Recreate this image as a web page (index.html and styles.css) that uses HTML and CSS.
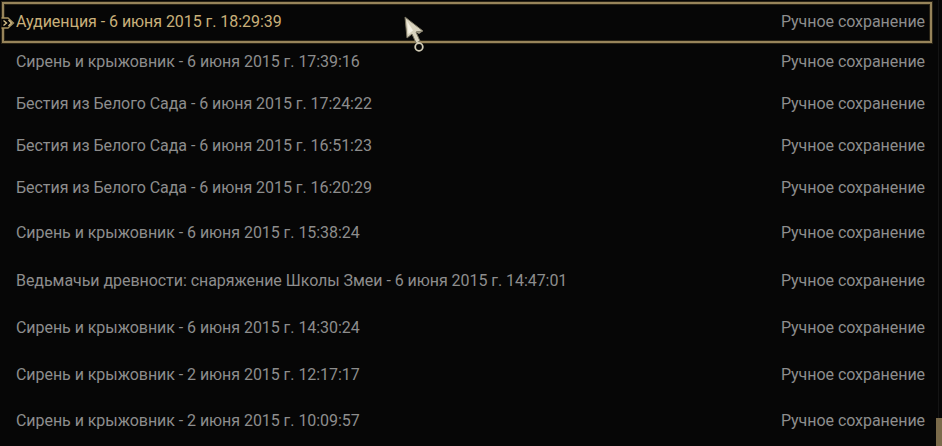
FILE: index.html
```html
<!DOCTYPE html>
<html lang="ru">
<head>
<meta charset="utf-8">
<link rel="stylesheet" href="styles.css">
</head>
<body>
<div class="screen">
  <ul class="saves">
    <li class="row selected r1">
      <svg class="marker" width="16" height="16" viewBox="0 0 16 16"><path d="M0.5 3 L7 3 L12.5 8 L7 13 L0.5 13" fill="#060606" stroke="#a8935f" stroke-width="1.3"/><path d="M2.5 5.5 L5.5 8 L2.5 10.5" fill="none" stroke="#d6c08a" stroke-width="1.4"/><path d="M7.5 5 L10.5 8 L7.5 11" fill="none" stroke="#d6c08a" stroke-width="1.4"/></svg>
      <span class="name">Аудиенция - 6 июня 2015 г. 18:29:39</span>
      <span class="type">Ручное сохранение</span>
    </li>
    <li class="row r2"><span class="name">Сирень и крыжовник - 6 июня 2015 г. 17:39:16</span><span class="type">Ручное сохранение</span></li>
    <li class="row r3"><span class="name">Бестия из Белого Сада - 6 июня 2015 г. 17:24:22</span><span class="type">Ручное сохранение</span></li>
    <li class="row r4"><span class="name">Бестия из Белого Сада - 6 июня 2015 г. 16:51:23</span><span class="type">Ручное сохранение</span></li>
    <li class="row r5"><span class="name">Бестия из Белого Сада - 6 июня 2015 г. 16:20:29</span><span class="type">Ручное сохранение</span></li>
    <li class="row r6"><span class="name">Сирень и крыжовник - 6 июня 2015 г. 15:38:24</span><span class="type">Ручное сохранение</span></li>
    <li class="row r7"><span class="name">Ведьмачьи древности: снаряжение Школы Змеи - 6 июня 2015 г. 14:47:01</span><span class="type">Ручное сохранение</span></li>
    <li class="row r8"><span class="name">Сирень и крыжовник - 6 июня 2015 г. 14:30:24</span><span class="type">Ручное сохранение</span></li>
    <li class="row r9"><span class="name">Сирень и крыжовник - 2 июня 2015 г. 12:17:17</span><span class="type">Ручное сохранение</span></li>
    <li class="row r10"><span class="name">Сирень и крыжовник - 2 июня 2015 г. 10:09:57</span><span class="type">Ручное сохранение</span></li>
  </ul>
  <div class="scrollbar"><div class="thumb"></div></div>
  <svg class="cursor" width="26" height="38" viewBox="0 0 26 38">
    <path d="M2 2 L4 23 L9 19 L13 28 L17 26 L13 17 L20 16 Z" fill="#d9d3be" stroke="#77725f" stroke-width="1"/>
    <path d="M4 6 L5.5 19 L10 15.5 Z" fill="#f4f0e2"/>
    <path d="M13 17 L20 16 L16 19 Z" fill="#9e9883"/>
    <circle cx="16" cy="32" r="3.8" fill="none" stroke="#d2ccb6" stroke-width="1.8"/>
    <path d="M14 27 L16 28.5" stroke="#d2ccb6" stroke-width="1.8"/>
  </svg>
</div>
</body>
</html>
```
FILE: styles.css
```css
html, body {
  margin: 0;
  padding: 0;
  background: #050505;
}
.screen {
  position: relative;
  width: 942px;
  height: 446px;
  overflow: hidden;
  background: #060606;
  display: flex;
  font-family: Roboto, "Noto Sans", sans-serif;
}
.saves {
  list-style: none;
  margin: 2px 0 0 2px;
  padding: 0;
  width: 930px;
  display: grid;
  grid-template-rows: 41px 41px 43px 41px 43px 47px 49px 45px 48px 45px;
  align-content: start;
}
.row {
  position: relative;
  display: flex;
  align-items: center;
  justify-content: space-between;
  padding: 0 7px 4px 14px;
  font-size: 16px;
  letter-spacing: -0.05px;
  color: #8d8d8d;
  white-space: nowrap;
}
.row.selected {
  border: 2px solid #97845a;
  box-shadow: inset 0 0 0 1px #2a2416, 0 0 0 1px #2a2416;
  padding: 0 5px 3px 12px;
}
.row.selected .name {
  color: #c9b07a;
}
.marker {
  position: absolute;
  left: -3px;
  top: 11px;
}
.scrollbar {
  position: relative;
  margin-left: 4px;
  width: 6px;
  height: 446px;
}
.scrollbar::before {
  content: "";
  position: absolute;
  left: 2px;
  top: 0;
  bottom: 0;
  width: 1px;
  background: #141414;
}
.thumb {
  position: absolute;
  left: 0;
  bottom: 0;
  width: 6px;
  height: 28px;
  background: #7a6a4a;
}
.cursor {
  position: absolute;
  left: 403px;
  top: 15px;
}
```
